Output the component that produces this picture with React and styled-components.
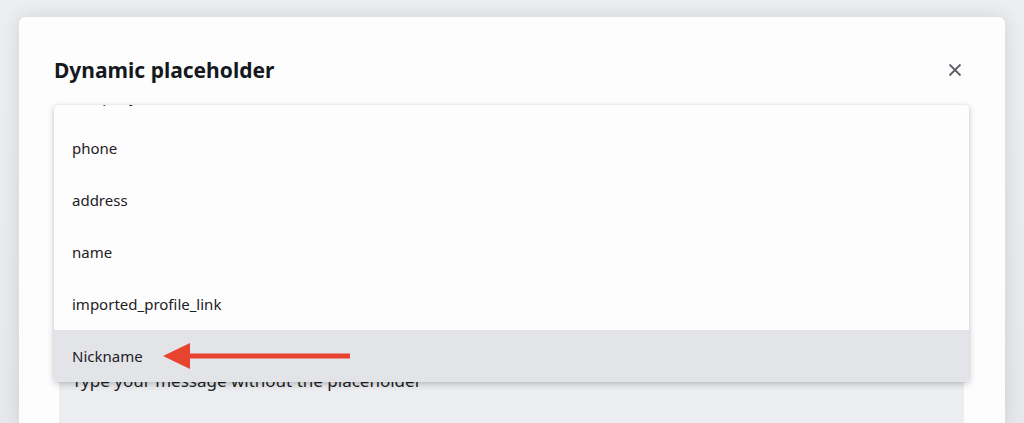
import React from "react";
import styled, { createGlobalStyle } from "styled-components";

const Global = createGlobalStyle`
  html, body { margin: 0; padding: 0; }
  body {
    background: #e9ebee;
    font-family: "Noto Sans", "Open Sans", sans-serif;
    overflow: hidden;
  }
  #root { height: 423px; overflow: hidden; }
`;

const Backdrop = styled.div`
  height: 423px;
  box-sizing: border-box;
  padding: 17px 19px 0 19px;
  background: linear-gradient(180deg, #eceef0 0%, #e6e8eb 100%);
  overflow: hidden;
`;

const Modal = styled.div`
  height: 100%;
  background: #fdfdfd;
  border-radius: 6px 6px 0 0;
  box-shadow: 0 0 18px rgba(0, 0, 0, 0.12);
  padding: 38px 36px 0 35px;
  box-sizing: border-box;
  display: flex;
  flex-direction: column;
  overflow: hidden;
`;

const Header = styled.div`
  display: flex;
  align-items: center;
  justify-content: space-between;
  height: 30px;
  margin-right: 2px;
`;

const Title = styled.h2`
  margin: 0;
  font-size: 21px;
  line-height: 30px;
  font-weight: 700;
  color: #15191e;
`;

const CloseButton = styled.button`
  border: none;
  background: none;
  padding: 0;
  width: 24px;
  height: 24px;
  display: flex;
  align-items: center;
  justify-content: center;
  color: #5c6168;
  cursor: pointer;
`;

const Body = styled.div`
  position: relative;
  margin-top: 20px;
  flex: 1;
`;

const Trigger = styled.div`
  height: 44px;
  border: 1px solid #cfd2d7;
  border-radius: 4px;
  box-sizing: border-box;
  padding: 0 18px;
  display: flex;
  align-items: center;
  font-size: 15px;
  color: #1d2125;
`;

const MessageBox = styled.div`
  margin: 207px 5px 0 5px;
  background: #ecedf0;
  padding: 13px 13px;
  height: 120px;
  box-sizing: border-box;
  font-size: 17px;
  line-height: 24px;
  color: #1d2125;
`;

const Menu = styled.div`
  position: absolute;
  top: 0;
  left: 0;
  right: 0;
  height: 277px;
  overflow: hidden;
  background: #fdfdfd;
  border-radius: 4px;
  box-shadow: 0 2px 7px rgba(0, 0, 0, 0.22), 0 0 2px rgba(0, 0, 0, 0.08);
  z-index: 2;
`;

const List = styled.ul`
  list-style: none;
  margin: -35px 0 0 0;
  padding: 0;
`;

const Option = styled.li`
  position: relative;
  height: 52px;
  line-height: 52px;
  padding: 0 18px;
  font-size: 15px;
  color: #1d2125;
  background: ${(p) => (p.$active ? "#e3e4e8" : "transparent")};
`;

const Arrow = styled.svg`
  position: absolute;
  left: 109px;
  top: 12px;
  width: 187px;
  height: 28px;
`;

const options = ["company", "phone", "address", "name", "imported_profile_link", "Nickname"];

export default function App() {
  return (
    <>
      <Global />
      <Backdrop>
        <Modal>
          <Header>
            <Title>Dynamic placeholder</Title>
            <CloseButton aria-label="Close">
              <svg width="24" height="24" viewBox="0 0 24 24" fill="none" stroke="currentColor" strokeWidth="1.8">
                <path d="M17.5 6.5 6.5 17.5" />
                <path d="m6.5 6.5 11 11" />
              </svg>
            </CloseButton>
          </Header>
          <Body>
            <Trigger>Nickname</Trigger>
            <MessageBox>Type your message without the placeholder</MessageBox>
            <Menu>
              <List>
                {options.map((o) => (
                  <Option key={o} $active={o === "Nickname"}>
                    {o}
                    {o === "Nickname" && (
                      <Arrow viewBox="0 0 187 28">
                        <polygon points="0,14 27,1 27,27" fill="#e8432f" />
                        <rect x="26" y="11.5" width="161" height="5" fill="#e8432f" />
                      </Arrow>
                    )}
                  </Option>
                ))}
              </List>
            </Menu>
          </Body>
        </Modal>
      </Backdrop>
    </>
  );
}
